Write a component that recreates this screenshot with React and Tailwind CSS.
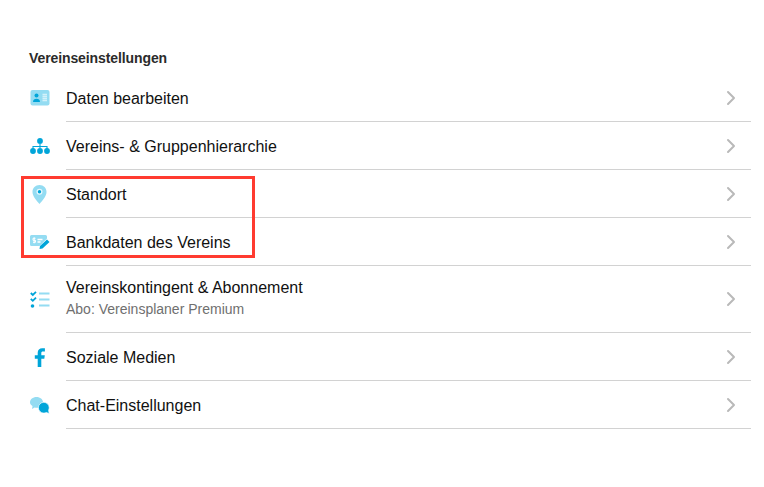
import React from 'react';
import { ChevronRight } from 'lucide-react';

const DARK = '#00a5d9';
const LIGHT = '#94dcf2';

const CardIcon = () => (
  <svg width="20" height="16" viewBox="0 0 20 16">
    <rect x="0.5" y="0" width="19" height="15.500" rx="2" fill={LIGHT} />
    <circle cx="6.500" cy="5.500" r="2" fill={DARK} />
    <path d="M3 12c0-2.200 1.500-3.300 3.500-3.300S10 9.800 10 12z" fill={DARK} />
    <path d="M12.500 4.500H17M12.500 6.500H17M12.500 8.500H17M12.500 10.500H17" stroke="#d4f1fa" strokeWidth="1.300" />
  </svg>
);

const HierarchyIcon = () => (
  <svg width="20" height="16" viewBox="0 0 20 16">
    <path d="M10 4v6M3 12V8.500h14V12" stroke={DARK} strokeWidth="1.100" fill="none" />
    <circle cx="10" cy="2.900" r="2.900" fill={DARK} />
    <circle cx="3" cy="13" r="2.900" fill={DARK} />
    <circle cx="10" cy="13" r="2.900" fill={DARK} />
    <circle cx="17" cy="13" r="2.900" fill={DARK} />
  </svg>
);

const PinIcon = () => (
  <svg width="15" height="19" viewBox="0 0 15 19">
    <path d="M7.500 0C3.400 0 .5 3 .5 6.900c0 4.300 4.400 9 7 12.100 2.600-3.100 7-7.800 7-12.100C14.500 3 11.600 0 7.500 0z" fill={LIGHT} />
    <circle cx="7.500" cy="6.800" r="3" fill="#e6f7fc" />
    <circle cx="7.500" cy="6.800" r="1.700" fill={DARK} />
  </svg>
);

const BankIcon = () => (
  <svg width="20" height="14" viewBox="0 0 20 14">
    <path d="M1.500 0h14a1.500 1.500 0 0 1 1.500 1.500v2l-7.500 7.500h-8a1.500 1.500 0 0 1-1.500-1.500v-8a1.500 1.500 0 0 1 1.500-1.500z" fill={LIGHT} />
    <path d="M5.500 3.300h-2.500v2h2.500v2h-2.500M4.200 2.300v6" stroke="#fff" strokeWidth="1" fill="none" />
    <path d="M7.500 4.500h5M7.500 7h3" stroke="#fff" strokeWidth="1.300" fill="none" />
    <path d="M17 4.500l2.500 2.500-7 6.500-3 .5.500-3z" fill={DARK} />
  </svg>
);

const ChecklistIcon = () => (
  <svg width="20" height="17" viewBox="0 0 20 17">
    <path d="M.8 2l2 2L6 .8M.8 7.800l2 2L6 6.600" stroke={DARK} strokeWidth="1.800" fill="none" />
    <circle cx="2.500" cy="15" r="1.800" fill={DARK} />
    <path d="M9 2.500h10.500M9 8.500h10.500M9 14.500h10.500" stroke={LIGHT} strokeWidth="2" fill="none" />
  </svg>
);

const FacebookIcon = () => (
  <svg width="12" height="19" viewBox="0 0 11 19">
    <path d="M3.200 19v-8.300H.300V7.300h2.900V4.800C3.200 1.800 5 .200 7.700.200c1.300 0 2.400.100 2.700.100v3.100H8.600c-1.500 0-1.800.700-1.800 1.700v2.200h3.500l-.500 3.400h-3V19z" fill={DARK} />
  </svg>
);

const ChatIcon = () => (
  <svg width="20" height="17" viewBox="0 0 20 17">
    <path d="M6.500 0C10.100 0 13 2.400 13 5.400s-2.900 5.400-6.500 5.400c-.600 0-1.200-.100-1.800-.200L2 12l.5-3C1 8 0 6.900 0 5.400 0 2.400 2.900 0 6.500 0z" fill={LIGHT} />
    <path d="M13.800 5.300c3 0 5.400 2.400 5.400 5.400 0 .9-.200 1.700-.600 2.500l.600 3.300-3-1c-.7.400-1.500.6-2.400.6-3 0-5.400-2.400-5.400-5.400s2.400-5.400 5.400-5.400z" fill={DARK} stroke="#fff" strokeWidth="0.700" />
  </svg>
);

const rows = [
  { icon: CardIcon, label: 'Daten bearbeiten' },
  { icon: HierarchyIcon, label: 'Vereins- & Gruppenhierarchie' },
  { icon: PinIcon, label: 'Standort' },
  { icon: BankIcon, label: 'Bankdaten des Vereins' },
  { icon: ChecklistIcon, label: 'Vereinskontingent & Abonnement', sub: 'Abo: Vereinsplaner Premium' },
  { icon: FacebookIcon, label: 'Soziale Medien' },
  { icon: ChatIcon, label: 'Chat-Einstellungen' },
];

export default function App() {
  return (
    <div className="relative h-[487px] w-[764px] overflow-hidden bg-white pt-[50px] font-['Liberation_Sans',Arial,sans-serif]">
      <h2 className="ml-[29px] h-[24px] text-[14px] font-bold leading-[16px] tracking-[-0.1px] text-[#2b2b2b]">Vereinseinstellungen</h2>

      <ul>
        {rows.map((row) => {
          const Icon = row.icon;
          return (
            <li key={row.label} className="flex items-stretch">
              <div className="flex w-[66px] shrink-0 items-center pl-[29px]">
                <div className="flex w-[21px] justify-center">
                  <Icon />
                </div>
              </div>
              <div className={`mr-[13px] flex flex-1 items-center justify-between border-b border-[#d2d2d2] ${row.sub ? 'h-[67px]' : 'h-[48px]'}`}>
                <div className={row.sub ? 'pb-[3px]' : 'pt-[2px]'}>
                  <p className="text-[16px] leading-[20px] text-[#111111]">{row.label}</p>
                  {row.sub && <p className="mt-[3px] text-[14px] leading-[16px] text-[#6f6f6f]">{row.sub}</p>}
                </div>
                <ChevronRight className="mr-[8px] h-[24px] w-[24px] text-[#b9b9b9]" strokeWidth={2} />
              </div>
            </li>
          );
        })}
      </ul>

      {/* Roter Markierungsrahmen */}
      <div className="absolute left-[21px] top-[176px] h-[82px] w-[234px] border-[3px] border-[#ff3b30]" />
    </div>
  );
}
